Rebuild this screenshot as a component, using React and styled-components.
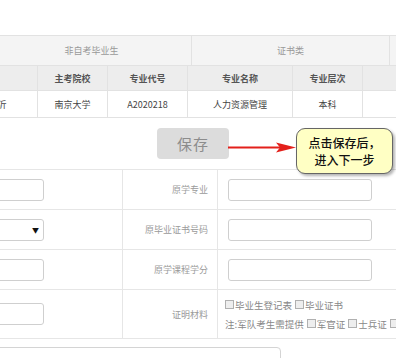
import styled, { createGlobalStyle } from "styled-components";

const GlobalStyle = createGlobalStyle`
  html, body {
    margin: 0;
    padding: 0;
    background: #fff;
  }
  body {
    font-family: "Noto Sans CJK SC", "Noto Sans", sans-serif;
  }
`;

const Page = styled.div`
  position: relative;
  width: 396px;
  height: 358px;
  overflow: hidden;
  padding-top: 35px;
  box-sizing: border-box;
`;

const Table = styled.div`
  margin-left: -60px;
  width: 520px;
`;

const Row = styled.div`
  display: grid;
  grid-template-columns: ${(p) => p.cols};
  height: ${(p) => p.h}px;
  box-sizing: border-box;
  background: ${(p) => p.bg || "#fff"};
  border-top: ${(p) => (p.top ? "1px solid #e2e2e2" : "none")};
  border-bottom: 1px solid #e2e2e2;
`;

const Cell = styled.div`
  display: flex;
  align-items: center;
  justify-content: center;
  border-right: 1px solid #e2e2e2;
  font-size: 9px;
  white-space: nowrap;
  color: ${(p) => p.color || "#444"};
  font-weight: ${(p) => (p.bold ? 700 : 400)};
`;

const ActionBar = styled.div`
  height: 51px;
  padding: 10px 0 0 157px;
  box-sizing: border-box;
`;

const SaveButton = styled.button`
  width: 72px;
  height: 31px;
  border: none;
  border-radius: 4px;
  background: #dcdcdc;
  color: #8c8c8c;
  font-family: "Noto Sans CJK SC", sans-serif;
  font-size: 15px;
  letter-spacing: 1px;
  padding: 0;
`;

const Form = styled.div`
  margin-left: -100px;
  width: 500px;
  border-top: 1px solid #e6e6e6;
`;

const FormRow = styled.div`
  display: grid;
  grid-template-columns: 222px 96px 1fr;
  height: ${(p) => p.h}px;
  border-bottom: 1px solid #e6e6e6;
  box-sizing: border-box;
`;

const FieldCell = styled.div`
  display: flex;
  align-items: center;
  padding-left: 10px;
`;

const Label = styled.div`
  display: flex;
  align-items: center;
  justify-content: flex-end;
  padding-right: 9px;
  font-size: 9px;
  color: #9a9a9a;
  border-left: 1px solid #e6e6e6;
  border-right: 1px solid #e6e6e6;
  white-space: nowrap;
`;

const Input = styled.div`
  width: ${(p) => p.w}px;
  height: 22px;
  border: 1px solid #cfcfcf;
  border-radius: 3px;
  box-sizing: border-box;
  display: flex;
  align-items: center;
  justify-content: flex-end;
  padding-right: 4px;
  font-size: 7px;
  color: #111;
`;

const Checks = styled.div`
  display: flex;
  flex-direction: column;
  justify-content: center;
  gap: 5px;
  padding-left: 7px;
  font-size: 9.5px;
  color: #888;
  white-space: nowrap;
`;

const CheckLine = styled.div`
  display: flex;
  align-items: center;
  line-height: 14px;
`;

const Box = styled.span`
  display: inline-block;
  flex: none;
  width: 7px;
  height: 7px;
  border: 1px solid #b0b0b0;
  background: #eee;
  margin: 0 1px 0 ${(p) => p.gap || 0}px;
`;

const Textarea = styled.div`
  margin: 8px 0 0 -30px;
  width: 309px;
  height: 40px;
  border: 1px solid #d4d4d4;
  border-radius: 4px;
`;

const Arrow = styled.svg`
  position: absolute;
  left: 226px;
  top: 140px;
`;

const Callout = styled.div`
  position: absolute;
  left: 296px;
  top: 128px;
  width: 97px;
  height: 46px;
  box-sizing: border-box;
  border: 1px solid #666;
  border-radius: 9px;
  background: #ffffc4;
  box-shadow: 2px 2px 3px rgba(0, 0, 0, 0.3);
  display: flex;
  flex-direction: column;
  align-items: center;
  justify-content: center;
  font-size: 12px;
  line-height: 17px;
  font-weight: 500;
  color: #111;
`;

const headTop = "52px 200px 198px 1fr";
const cols = "98px 70px 80px 105px 70px 1fr";

export default function App() {
  return (
    <>
      <GlobalStyle />
      <Page>
        <Table>
          <Row cols={headTop} h={31} bg="#f4f4f4" top>
            <Cell />
            <Cell color="#999">非自考毕业生</Cell>
            <Cell color="#999">证书类</Cell>
            <Cell />
          </Row>
          <Row cols={cols} h={25} bg="#ededed">
            <Cell />
            <Cell bold color="#555">主考院校</Cell>
            <Cell bold color="#555">专业代号</Cell>
            <Cell bold color="#555">专业名称</Cell>
            <Cell bold color="#555">专业层次</Cell>
            <Cell />
          </Row>
          <Row cols={cols} h={27}>
            <Cell>江苏临沂</Cell>
            <Cell>南京大学</Cell>
            <Cell>A2020218</Cell>
            <Cell>人力资源管理</Cell>
            <Cell>本科</Cell>
            <Cell />
          </Row>
        </Table>

        <ActionBar>
          <SaveButton>保存</SaveButton>
        </ActionBar>

        <Form>
          <FormRow h={40}>
            <FieldCell>
              <Input w={134} />
            </FieldCell>
            <Label>原学专业</Label>
            <FieldCell>
              <Input w={144} />
            </FieldCell>
          </FormRow>
          <FormRow h={40}>
            <FieldCell>
              <Input w={134}>▼</Input>
            </FieldCell>
            <Label>原毕业证书号码</Label>
            <FieldCell>
              <Input w={144} />
            </FieldCell>
          </FormRow>
          <FormRow h={40}>
            <FieldCell>
              <Input w={134} />
            </FieldCell>
            <Label>原学课程学分</Label>
            <FieldCell>
              <Input w={144} />
            </FieldCell>
          </FormRow>
          <FormRow h={49}>
            <FieldCell>
              <Input w={134} />
            </FieldCell>
            <Label>证明材料</Label>
            <Checks>
              <CheckLine>
                <Box />
                毕业生登记表
                <Box gap={3} />
                毕业证书
              </CheckLine>
              <CheckLine>
                注:军队考生需提供
                <Box gap={3} />
                军官证
                <Box gap={3} />
                士兵证
                <Box gap={3} />
              </CheckLine>
            </Checks>
          </FormRow>
        </Form>

        <Textarea />

        <Arrow width="72" height="16" viewBox="0 0 72 16">
          <line x1="2" y1="7.5" x2="56" y2="7.5" stroke="#e3201b" strokeWidth="2.2" />
          <polygon points="50,2.5 70,7.5 50,12.5 54,7.5" fill="#e3201b" />
        </Arrow>
        <Callout>
          <span>点击保存后，</span>
          <span>进入下一步</span>
        </Callout>
      </Page>
    </>
  );
}
